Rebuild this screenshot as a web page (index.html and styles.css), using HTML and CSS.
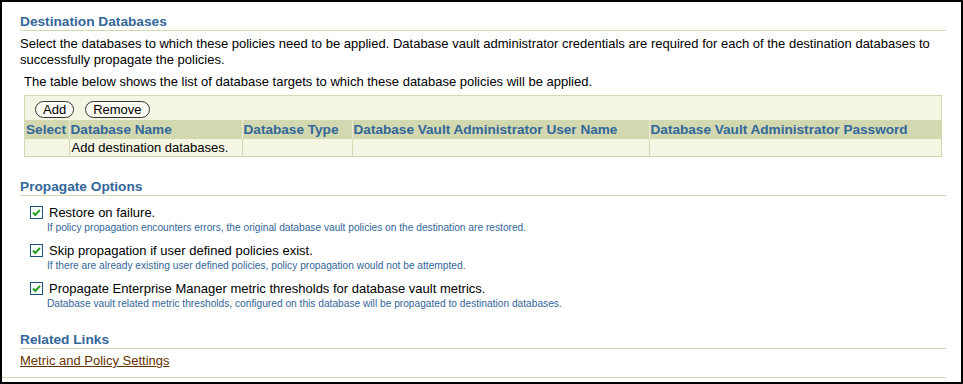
FILE: index.html
```html
<!DOCTYPE html>
<html lang="en">
<head>
    <meta charset="UTF-8">
    <meta name="viewport" content="width=device-width, initial-scale=1.0">
    <title>Propagate Database Vault Policies</title>
    <link rel="stylesheet" href="styles.css">
</head>
<body>
    <div class="frame">
        <div class="content">
            <h2 class="section-title">Destination Databases</h2>
            <p class="intro">Select the databases to which these policies need to be applied. Database vault administrator credentials are required for each of the destination databases to<br>successfully propagate the policies.</p>
            <p class="table-note">The table below shows the list of database targets to which these database policies will be applied.</p>

            <div class="db-table">
                <div class="toolbar">
                    <button class="pill">Add</button>
                    <button class="pill">Remove</button>
                </div>
                <table>
                    <colgroup>
                        <col class="col-select">
                        <col class="col-name">
                        <col class="col-type">
                        <col class="col-user">
                        <col>
                    </colgroup>
                    <thead>
                        <tr>
                            <th>Select</th>
                            <th>Database Name</th>
                            <th>Database Type</th>
                            <th>Database Vault Administrator User Name</th>
                            <th>Database Vault Administrator Password</th>
                        </tr>
                    </thead>
                    <tbody>
                        <tr>
                            <td></td>
                            <td>Add destination databases.</td>
                            <td></td>
                            <td></td>
                            <td></td>
                        </tr>
                    </tbody>
                </table>
            </div>

            <h2 class="section-title options-title">Propagate Options</h2>
            <div class="options">
                <div class="option">
                    <span class="check"><svg width="13" height="13" viewBox="0 0 13 13"><rect x="0.5" y="0.5" width="12" height="12" fill="#fff" stroke="#1c5180"/><path d="M3 6.5 L5.3 9 L10 3.8" fill="none" stroke="#21a121" stroke-width="2"/></svg></span>
                    <div>
                        <div class="option-label">Restore on failure.</div>
                        <div class="option-help">If policy propagation encounters errors, the original database vault policies on the destination are restored.</div>
                    </div>
                </div>
                <div class="option">
                    <span class="check"><svg width="13" height="13" viewBox="0 0 13 13"><rect x="0.5" y="0.5" width="12" height="12" fill="#fff" stroke="#1c5180"/><path d="M3 6.5 L5.3 9 L10 3.8" fill="none" stroke="#21a121" stroke-width="2"/></svg></span>
                    <div>
                        <div class="option-label">Skip propagation if user defined policies exist.</div>
                        <div class="option-help">If there are already existing user defined policies, policy propagation would not be attempted.</div>
                    </div>
                </div>
                <div class="option">
                    <span class="check"><svg width="13" height="13" viewBox="0 0 13 13"><rect x="0.5" y="0.5" width="12" height="12" fill="#fff" stroke="#1c5180"/><path d="M3 6.5 L5.3 9 L10 3.8" fill="none" stroke="#21a121" stroke-width="2"/></svg></span>
                    <div>
                        <div class="option-label">Propagate Enterprise Manager metric thresholds for database vault metrics.</div>
                        <div class="option-help">Database vault related metric thresholds, configured on this database will be propagated to destination databases.</div>
                    </div>
                </div>
            </div>

            <h2 class="section-title links-title">Related Links</h2>
            <a class="related-link" href="#">Metric and Policy Settings</a>
        </div>
        <div class="bottom-rule"></div>
    </div>
</body>
</html>
```

FILE: styles.css
```css
html, body {
    margin: 0;
    padding: 0;
    background: #fff;
}
body {
    font-family: "Liberation Sans", Arial, sans-serif;
    font-size: 13px;
    color: #000;
}
.frame {
    box-sizing: border-box;
    width: 963px;
    height: 384px;
    border: 2px solid #000;
    overflow: hidden;
}
.content {
    padding: 12px 15px 0 18px;
}
.section-title {
    margin: 0;
    font-size: 13.7px;
    font-weight: bold;
    color: #336699;
    line-height: 16px;
    border-bottom: 1px solid #d2d8b0;
}
.intro {
    margin: 5px 0 0 0;
    line-height: 16px;
    white-space: nowrap;
}
.table-note {
    margin: 6px 0 0 4px;
    line-height: 16px;
}
.db-table {
    box-sizing: border-box;
    width: 918px;
    margin: 5px 0 0 4px;
    background: #f5f5e3;
    border: 1px solid #d2d8b0;
    border-bottom: none;
}
.toolbar {
    display: flex;
    gap: 11px;
    padding: 5px 0 2px 10px;
}
.pill {
    font-family: "Liberation Sans", Arial, sans-serif;
    font-size: 13px;
    line-height: 15px;
    padding: 0 7px;
    background: #fbfbf3;
    border: 1px solid #333;
    border-radius: 9px;
    color: #000;
}
table {
    width: 100%;
    border-collapse: collapse;
    table-layout: fixed;
}
th {
    background: #d2d8b0;
    color: #336699;
    font-size: 13.6px;
    font-weight: bold;
    text-align: left;
    height: 19px;
    padding: 0 0 0 1px;
    border-left: 1px solid #ecedd8;
    white-space: nowrap;
    overflow: hidden;
}
th:first-child {
    border-left: none;
}
td {
    height: 17px;
    padding: 0 0 0 2px;
    border: 1px solid #d2d8b0;
    border-top: none;
}
td:first-child {
    border-left: none;
}
td:last-child {
    border-right: none;
}
.col-select { width: 44px; }
.col-name { width: 173px; }
.col-type { width: 110px; }
.col-user { width: 297px; }
.options-title {
    margin-top: 22px;
}
.options {
    padding: 9px 0 0 10px;
}
.option {
    display: flex;
    gap: 6px;
    margin-bottom: 8px;
}
.option:last-child {
    margin-bottom: 0;
}
.check {
    display: block;
    height: 13px;
    margin-top: 1px;
}
.check svg {
    display: block;
}
.option-label {
    line-height: 16px;
}
.option-help {
    font-size: 10.2px;
    line-height: 14px;
    color: #336699;
    margin-left: -2px;
}
.links-title {
    margin-top: 21px;
}
.related-link {
    display: inline-block;
    margin-top: 4px;
    line-height: 16px;
    color: #663300;
    text-decoration: underline;
}
.bottom-rule {
    margin: 8px 15px 0 0;
    border-top: 1px solid #d2d8b0;
}
```
